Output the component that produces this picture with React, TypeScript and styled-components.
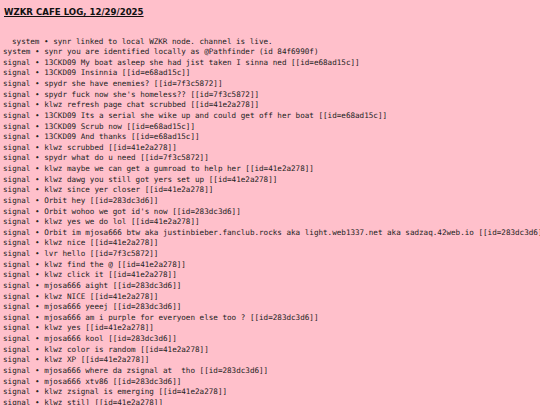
import React from "react";
import styled, { createGlobalStyle } from "styled-components";

const Global = createGlobalStyle`
  html, body { margin: 0; padding: 0; background: #ffc0cb; }
  body { width: 540px; height: 405px; overflow: hidden; }
`;

const Page = styled.main`
  display: flex;
  flex-direction: column;
  padding: 4px 0 0 3px;
  background: #ffc0cb;
  color: #222;
  min-height: 405px;
  box-sizing: border-box;
`;

const Title = styled.h1`
  margin: 0 0 0 1px;
  font-family: "DejaVu Sans", Verdana, sans-serif;
  font-weight: bold;
  font-size: 8.6px;
  line-height: 16px;
  text-decoration: underline;
  color: #111;
  white-space: nowrap;
`;

const Log = styled.pre`
  margin: 16.5px 0 0 0;
  font-family: "DejaVu Sans Mono", "Liberation Mono", monospace;
  font-size: 7.6px;
  line-height: 10.62px;
  white-space: pre;
  display: flex;
  flex-direction: column;
`;

const Line = styled.span<{ $indent?: boolean }>`
  display: block;
  padding-left: ${(p) => (p.$indent ? "9px" : "0")};
`;

const lines: { t: string; indent?: boolean }[] = [
  { t: "system • synr linked to local WZKR node. channel is live.", indent: true },
  { t: "system • synr you are identified locally as @Pathfinder (id 84f6990f)" },
  { t: "signal • 13CKD09 My boat asleep she had jist taken I sinna ned [[id=e68ad15c]]" },
  { t: "signal • 13CKD09 Insinnia [[id=e68ad15c]]" },
  { t: "signal • spydr she have enemies? [[id=7f3c5872]]" },
  { t: "signal • spydr fuck now she's homeless?? [[id=7f3c5872]]" },
  { t: "signal • klwz refresh page chat scrubbed [[id=41e2a278]]" },
  { t: "signal • 13CKD09 Its a serial she wike up and could get off her boat [[id=e68ad15c]]" },
  { t: "signal • 13CKD09 Scrub now [[id=e68ad15c]]" },
  { t: "signal • 13CKD09 And thanks [[id=e68ad15c]]" },
  { t: "signal • klwz scrubbed [[id=41e2a278]]" },
  { t: "signal • spydr what do u need [[id=7f3c5872]]" },
  { t: "signal • klwz maybe we can get a gumroad to help her [[id=41e2a278]]" },
  { t: "signal • klwz dawg you still got yers set up [[id=41e2a278]]" },
  { t: "signal • klwz since yer closer [[id=41e2a278]]" },
  { t: "signal • Orbit hey [[id=283dc3d6]]" },
  { t: "signal • Orbit wohoo we got id's now [[id=283dc3d6]]" },
  { t: "signal • klwz yes we do lol [[id=41e2a278]]" },
  { t: "signal • Orbit im mjosa666 btw aka justinbieber.fanclub.rocks aka light.web1337.net aka sadzaq.42web.io [[id=283dc3d6]]" },
  { t: "signal • klwz nice [[id=41e2a278]]" },
  { t: "signal • lvr hello [[id=7f3c5872]]" },
  { t: "signal • klwz find the @ [[id=41e2a278]]" },
  { t: "signal • klwz click it [[id=41e2a278]]" },
  { t: "signal • mjosa666 aight [[id=283dc3d6]]" },
  { t: "signal • klwz NICE [[id=41e2a278]]" },
  { t: "signal • mjosa666 yeeej [[id=283dc3d6]]" },
  { t: "signal • mjosa666 am i purple for everyoen else too ? [[id=283dc3d6]]" },
  { t: "signal • klwz yes [[id=41e2a278]]" },
  { t: "signal • mjosa666 kool [[id=283dc3d6]]" },
  { t: "signal • klwz color is random [[id=41e2a278]]" },
  { t: "signal • klwz XP [[id=41e2a278]]" },
  { t: "signal • mjosa666 where da zsignal at  tho [[id=283dc3d6]]" },
  { t: "signal • mjosa666 xtv86 [[id=283dc3d6]]" },
  { t: "signal • klwz zsignal is emerging [[id=41e2a278]]" },
  { t: "signal • klwz stil] [[id=41e2a278]]" },
];

export default function App() {
  return (
    <>
      <Global />
      <Page>
        <Title>WZKR CAFE LOG, 12/29/2025</Title>
        <Log>
          {lines.map((l, i) => (
            <Line key={i} $indent={l.indent}>
              {l.t}
            </Line>
          ))}
        </Log>
      </Page>
    </>
  );
}
